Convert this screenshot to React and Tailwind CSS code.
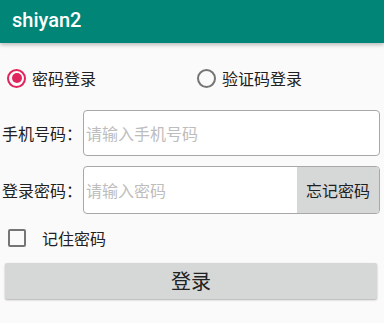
import React, { useState } from "react";

const CJK = "font-['Noto_Sans_CJK_SC','Noto_Sans',sans-serif]";

const Radio = ({ checked, label, onClick }) => (
  <button onClick={onClick} className="flex items-center gap-[6px] h-[24px]">
    <span
      className={`w-[19px] h-[19px] rounded-full border-2 flex items-center justify-center ${
        checked ? "border-[#e0245e]" : "border-[#757575]"
      }`}
    >
      {checked && <span className="w-[10px] h-[10px] rounded-full bg-[#e0245e]" />}
    </span>
    <span className="text-[16px] leading-[24px] text-[#212121]">{label}</span>
  </button>
);

export default function App() {
  const [mode, setMode] = useState("pwd");
  const [remember, setRemember] = useState(false);

  return (
    <div className={`w-[384px] h-[323px] bg-[#fafafa] overflow-hidden ${CJK}`}>
      {/* Toolbar */}
      <div className="h-[43px] bg-[#008577] flex items-center pl-[12px] shadow-[0_2px_4px_rgba(0,0,0,0.25)] relative">
        <span className="text-white text-[20px] font-medium font-['Roboto',sans-serif] leading-none pb-[3px]">
          shiyan2
        </span>
      </div>

      {/* Login mode */}
      <div className="flex mt-[23px] h-[24px]">
        <div className="w-[192px] pl-[7px]">
          <Radio checked={mode === "pwd"} label="密码登录" onClick={() => setMode("pwd")} />
        </div>
        <div className="w-[192px] pl-[5px]">
          <Radio checked={mode === "code"} label="验证码登录" onClick={() => setMode("code")} />
        </div>
      </div>

      {/* Phone */}
      <div className="flex items-center mt-[20px] pl-[2px] pr-[4px]">
        <span className="w-[81px] text-[16px] text-[#212121] leading-[24px]">手机号码：</span>
        <input
          placeholder="请输入手机号码"
          className="flex-1 h-[46px] border border-[#a8a8a8] rounded-[4px] bg-white px-[2px] text-[16px] outline-none placeholder:text-[#bdbdbd]"
        />
      </div>

      {/* Password */}
      <div className="flex items-center mt-[10px] pl-[2px] pr-[4px]">
        <span className="w-[81px] text-[16px] text-[#212121] leading-[24px]">登录密码：</span>
        <div className="flex-1 h-[48px] border border-[#a8a8a8] rounded-[4px] bg-white flex overflow-hidden">
          <input
            type="password"
            placeholder="请输入密码"
            className="flex-1 min-w-0 px-[2px] text-[16px] outline-none bg-transparent placeholder:text-[#bdbdbd]"
          />
          <button className="w-[82px] bg-[#d6d7d7] text-[16px] text-[#212121]">忘记密码</button>
        </div>
      </div>

      {/* Remember */}
      <div className="flex items-center mt-[14px] pl-[8px] h-[20px]">
        <button
          onClick={() => setRemember(!remember)}
          className="w-[18px] h-[18px] border-2 border-[#757575] rounded-[2px] bg-transparent"
        />
        <span className="ml-[16px] text-[16px] text-[#212121] leading-[24px]">记住密码</span>
      </div>

      {/* Login */}
      <div className="px-[5px] pr-[7px] mt-[15px]">
        <button className="w-full h-[36px] bg-[#d6d7d7] rounded-[2px] shadow-[0_1px_2px_rgba(0,0,0,0.3)] text-[20px] text-[#212121] leading-none">
          登录
        </button>
      </div>
    </div>
  );
}
